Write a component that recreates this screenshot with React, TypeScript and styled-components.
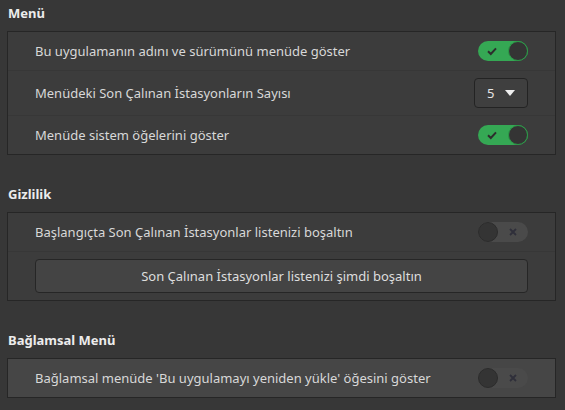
import React from 'react';
import styled, { createGlobalStyle } from 'styled-components';

const GlobalStyle = createGlobalStyle`
  html, body {
    margin: 0;
    padding: 0;
    background: #373737;
  }
  body {
    font-family: "Noto Sans", "DejaVu Sans", sans-serif;
    font-size: 13px;
    color: #dadada;
  }
`;

interface SwitchProps {
  on?: boolean;
}

const Switch: React.FC<SwitchProps> = ({ on }) => (
  <StyledTrack on={on ? 1 : 0}>
    {on ? (
      <svg width="12" height="12" viewBox="0 0 12 12" style={{ marginLeft: 8 }}>
        <path d="M2 6.2 L4.8 9 L10 3.4" fill="none" stroke="#2d2d2d" strokeWidth="2" />
      </svg>
    ) : null}
    <StyledKnob on={on ? 1 : 0} />
    {!on ? (
      <svg width="10" height="10" viewBox="0 0 10 10" style={{ marginRight: 10 }}>
        <path d="M2 2 L8 8 M8 2 L2 8" fill="none" stroke="#2f2f3a" strokeWidth="1.8" />
      </svg>
    ) : null}
  </StyledTrack>
);

const Combo: React.FC<{ value: string }> = ({ value }) => (
  <StyledCombo>
    <span>{value}</span>
    <svg width="10" height="6" viewBox="0 0 10 6">
      <path d="M0 0 L10 0 L5 6 Z" fill="#f0f0f0" />
    </svg>
  </StyledCombo>
);

const App: React.FC = () => {
  return (
    <>
      <GlobalStyle />
      <StyledPage>
        <StyledSection>
          <StyledHeading>Menü</StyledHeading>
          <StyledFrame>
            <StyledRow>
              <StyledLabel>Bu uygulamanın adını ve sürümünü menüde göster</StyledLabel>
              <Switch on />
            </StyledRow>
            <StyledRow size={44}>
              <StyledLabel>Menüdeki Son Çalınan İstasyonların Sayısı</StyledLabel>
              <Combo value="5" />
            </StyledRow>
            <StyledRow>
              <StyledLabel>Menüde sistem öğelerini göster</StyledLabel>
              <Switch on />
            </StyledRow>
          </StyledFrame>
        </StyledSection>

        <StyledSection>
          <StyledHeading>Gizlilik</StyledHeading>
          <StyledFrame>
            <StyledRow>
              <StyledLabel>Başlangıçta Son Çalınan İstasyonlar listenizi boşaltın</StyledLabel>
              <Switch />
            </StyledRow>
            <StyledRow size={48}>
              <StyledButton>Son Çalınan İstasyonlar listenizi şimdi boşaltın</StyledButton>
            </StyledRow>
          </StyledFrame>
        </StyledSection>

        <StyledSection>
          <StyledHeading>Bağlamsal Menü</StyledHeading>
          <StyledFrame hover>
            <StyledRow>
              <StyledLabel>Bağlamsal menüde 'Bu uygulamayı yeniden yükle' öğesini göster</StyledLabel>
              <Switch />
            </StyledRow>
          </StyledFrame>
        </StyledSection>
      </StyledPage>
    </>
  );
};

const StyledPage = styled.div`
  display: flex;
  flex-direction: column;
  gap: 30px;
  padding: 4px 10px 0 7px;
  width: 565px;
  height: 410px;
  box-sizing: border-box;
  overflow: hidden;
`;

const StyledSection = styled.section`
  display: flex;
  flex-direction: column;
`;

const StyledHeading = styled.div`
  font-weight: 700;
  color: #ececec;
  line-height: 19px;
  height: 19px;
  margin: 0 0 8px 1px;
`;

const StyledFrame = styled.div<{ hover?: boolean }>`
  display: flex;
  flex-direction: column;
  border: 1px solid #262626;
  background: ${(props) => (props.hover ? '#464646' : '#3c3c3c')};
  width: 549px;
  box-sizing: border-box;
`;

const StyledRow = styled.div<{ size?: number }>`
  display: flex;
  align-items: center;
  justify-content: space-between;
  height: ${(props) => props.size ?? 38}px;
  flex-shrink: 0;
  padding: 0 27px;
  & + & {
    border-top: 1px solid #373737;
  }
`;

const StyledLabel = styled.span`
  color: #d8d8d8;
  white-space: nowrap;
`;

const StyledTrack = styled.div<{ on: number }>`
  display: flex;
  align-items: center;
  justify-content: space-between;
  width: 50px;
  height: 20px;
  border-radius: 10px;
  background: ${(props) => (props.on ? '#35a854' : '#4a4a4a')};
  box-sizing: border-box;
`;

const StyledKnob = styled.div<{ on: number }>`
  width: 20px;
  height: 20px;
  border-radius: 50%;
  box-sizing: border-box;
  background: #343434;
  border: 1px solid ${(props) => (props.on ? '#2c9a48' : '#2c2c2c')};
`;

const StyledCombo = styled.div`
  display: flex;
  align-items: center;
  justify-content: space-between;
  width: 54px;
  height: 30px;
  padding: 0 12px;
  box-sizing: border-box;
  border: 1px solid #232323;
  border-radius: 4px;
  background: #3f3f3f;
  color: #e6e6e6;
`;

const StyledButton = styled.div`
  display: flex;
  align-items: center;
  justify-content: center;
  flex: 1;
  height: 34px;
  box-sizing: border-box;
  border: 1px solid #262626;
  border-radius: 4px;
  background: #444444;
  color: #dedede;
`;

export default App;
